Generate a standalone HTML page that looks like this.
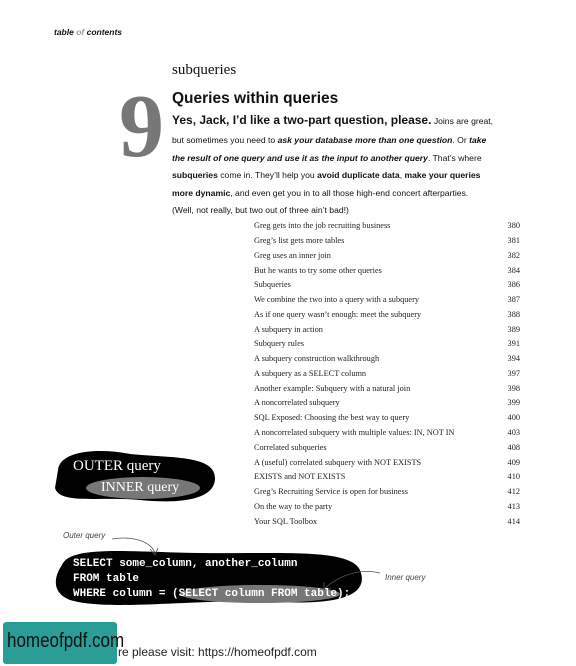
<!DOCTYPE html>
<html><head><meta charset="utf-8"><style>
body{margin:0;width:576px;height:666px;background:#fff;position:relative;overflow:hidden;font-family:"Liberation Sans",sans-serif;color:#111}
.a{position:absolute;white-space:nowrap}
.toc{position:absolute;left:254px;width:266px;font-family:"Liberation Serif",serif;font-size:8.3px;color:#222}
.toc span{position:absolute;right:0}
.p{font-size:8.6px;left:172px}
.code{font-family:"Liberation Mono",monospace;font-weight:bold;font-size:11px;color:#fff}
</style></head><body>
<div class="a" style="left:54px;top:27px;font-size:8.5px;font-weight:bold;font-style:italic">table <span style="color:#999">of</span> contents</div>
<div class="a" style="left:172px;top:62px;font-family:'Liberation Serif',serif;font-size:15px">subqueries</div>
<div class="a" style="left:119px;top:82px;font-family:'Liberation Serif',serif;font-size:90px;font-weight:bold;color:#777;line-height:1">9</div>
<div class="a" style="left:172px;top:90px;font-size:15.5px;font-weight:bold">Queries within queries</div>
<div class="a p" style="top:113px"><b style="font-size:12px">Yes, Jack, I’d like a two-part question, please.</b> Joins are great,</div>
<div class="a p" style="top:135px">but sometimes you need to <b><i>ask your database more than one question</i></b>. Or <b><i>take</i></b></div>
<div class="a p" style="top:153px"><b><i>the result of one query and use it as the input to another query</i></b>. That’s where</div>
<div class="a p" style="top:170px"><b>subqueries</b> come in. They’ll help you <b>avoid duplicate data</b>, <b>make your queries</b></div>
<div class="a p" style="top:188px"><b>more dynamic</b>, and even get you in to all those high-end concert afterparties.</div>
<div class="a p" style="top:205px">(Well, not really, but two out of three ain’t bad!)</div>

<div class="toc" style="top:221px">Greg gets into the job recruiting business<span>380</span></div>
<div class="toc" style="top:236px">Greg’s list gets more tables<span>381</span></div>
<div class="toc" style="top:251px">Greg uses an inner join<span>382</span></div>
<div class="toc" style="top:266px">But he wants to try some other queries<span>384</span></div>
<div class="toc" style="top:280px">Subqueries<span>386</span></div>
<div class="toc" style="top:295px">We combine the two into a query with a subquery<span>387</span></div>
<div class="toc" style="top:310px">As if one query wasn’t enough: meet the subquery<span>388</span></div>
<div class="toc" style="top:325px">A subquery in action<span>389</span></div>
<div class="toc" style="top:339px">Subquery rules<span>391</span></div>
<div class="toc" style="top:354px">A subquery construction walkthrough<span>394</span></div>
<div class="toc" style="top:369px">A subquery as a SELECT column<span>397</span></div>
<div class="toc" style="top:384px">Another example: Subquery with a natural join<span>398</span></div>
<div class="toc" style="top:398px">A noncorrelated subquery<span>399</span></div>
<div class="toc" style="top:413px">SQL Exposed: Choosing the best way to query<span>400</span></div>
<div class="toc" style="top:428px">A noncorrelated subquery with multiple values: IN, NOT IN<span>403</span></div>
<div class="toc" style="top:443px">Correlated subqueries<span>408</span></div>
<div class="toc" style="top:458px">A (useful) correlated subquery with NOT EXISTS<span>409</span></div>
<div class="toc" style="top:472px">EXISTS and NOT EXISTS<span>410</span></div>
<div class="toc" style="top:487px">Greg’s Recruiting Service is open for business<span>412</span></div>
<div class="toc" style="top:502px">On the way to the party<span>413</span></div>
<div class="toc" style="top:517px">Your SQL Toolbox<span>414</span></div>

<svg class="a" style="left:0;top:0" width="576" height="666">
<path d="M58 470 C60 450 100 448 130 454 C170 458 215 455 215 478 C215 500 180 504 140 500 C100 496 60 505 55 488 Z" fill="#000"/>
<ellipse cx="143" cy="488" rx="57" ry="11" fill="#777"/>
<path d="M62 565 C70 545 130 552 200 553 C280 554 350 548 360 570 C370 595 340 605 280 602 C200 598 110 612 70 600 C50 592 55 575 62 565 Z" fill="#000"/>
<ellipse cx="260" cy="594" rx="80" ry="9" fill="#777"/>
<path d="M112 539 C130 536 150 540 155 553" stroke="#555" fill="none" stroke-width="0.8"/>
<path d="M150 549 L155 555 L158 548" stroke="#555" fill="none" stroke-width="0.8"/>
<path d="M380 573 C360 568 340 575 325 588" stroke="#555" fill="none" stroke-width="0.8"/>
<path d="M324 582 L324 589 L331 588" stroke="#555" fill="none" stroke-width="0.8"/>
</svg>
<div class="a" style="left:73px;top:458px;font-family:'Liberation Serif',serif;font-size:15px;color:#fff">OUTER query</div>
<div class="a" style="left:101px;top:480px;font-family:'Liberation Serif',serif;font-size:14px;color:#fff">INNER query</div>
<div class="a" style="left:63px;top:531px;font-size:8px;font-style:italic;color:#444">Outer query</div>
<div class="a" style="left:385px;top:573px;font-size:8px;font-style:italic;color:#444">Inner query</div>
<div class="a code" style="left:73px;top:558px">SELECT some_column, another_column</div>
<div class="a code" style="left:73px;top:573px">FROM table</div>
<div class="a code" style="left:73px;top:588px">WHERE column = (SELECT column FROM table);</div>

<div class="a" style="left:3px;top:622px;width:114px;height:42px;background:#2a9d96;border-radius:3px"></div>
<div class="a" style="left:7px;top:630px;font-size:20px;color:#111;transform:scaleX(0.85);transform-origin:left">homeofpdf.com</div>
<div class="a" style="left:118px;top:645px;font-size:12px;color:#222">re please visit: https://homeofpdf.com</div>
</body></html>
